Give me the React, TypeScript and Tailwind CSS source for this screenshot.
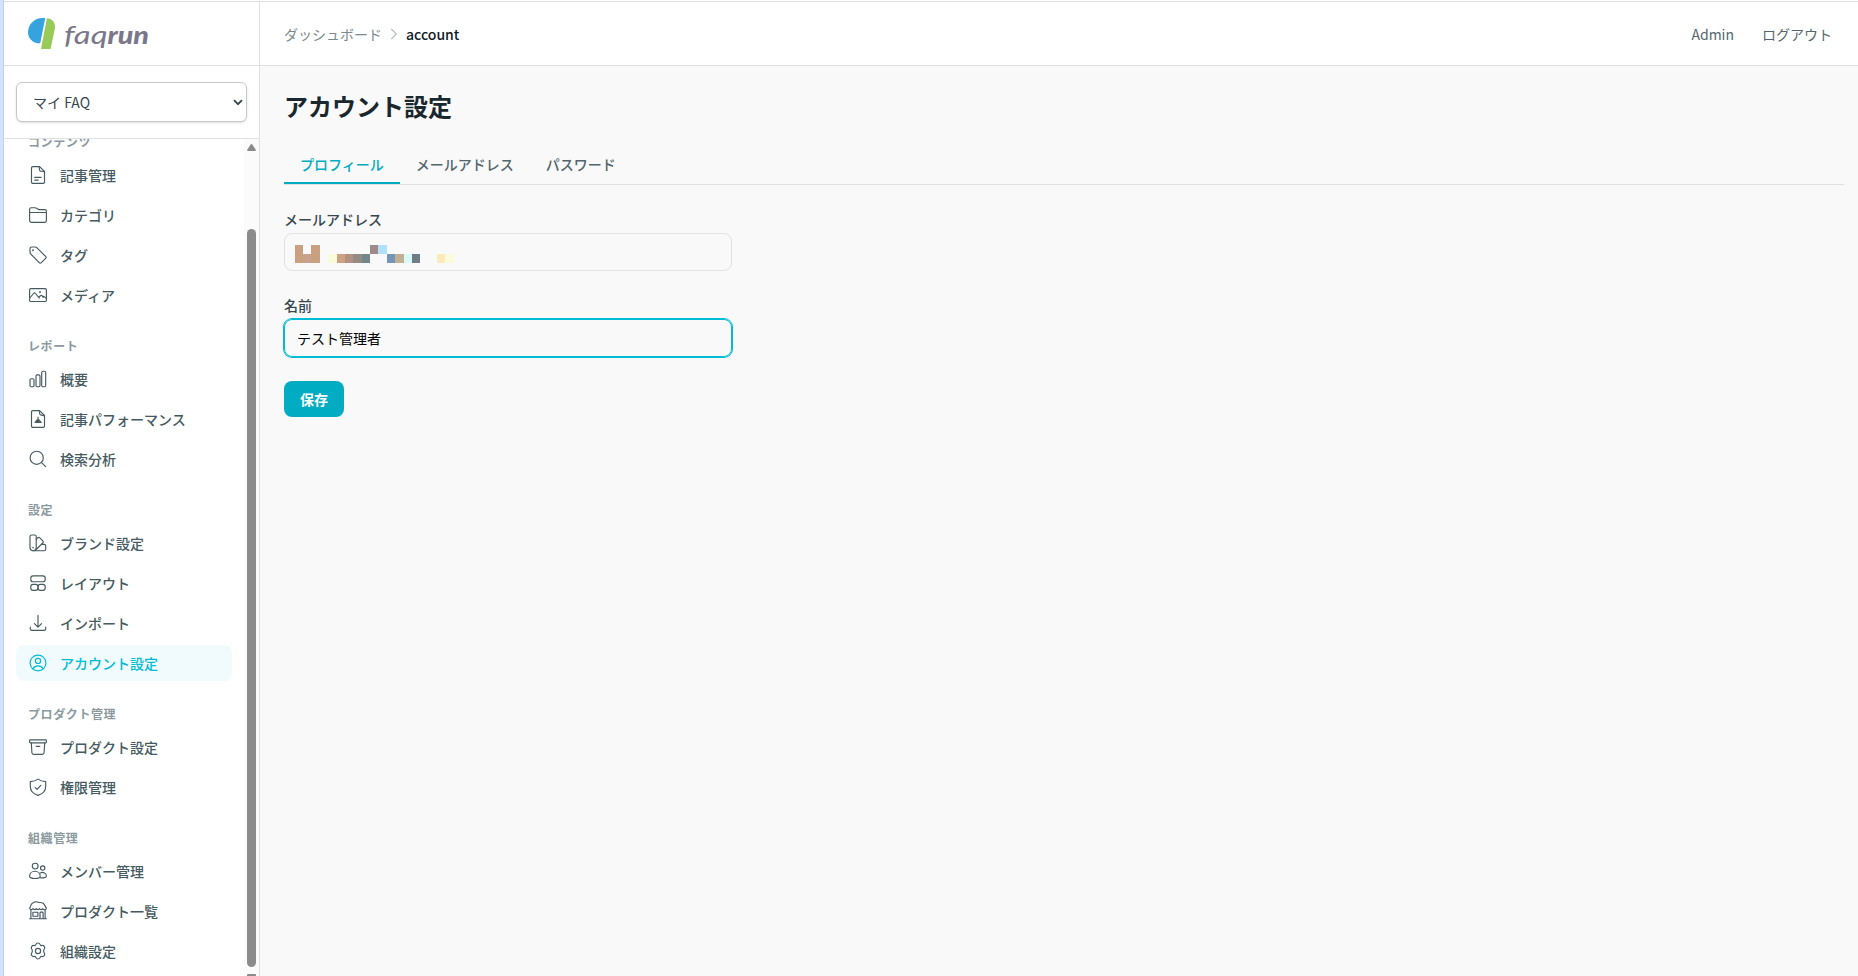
import React, { useState } from 'react';

type IconName =
  | 'article' | 'folder' | 'tag' | 'media' | 'bars' | 'performance' | 'search' | 'brand'
  | 'layout' | 'import' | 'account' | 'product' | 'shield' | 'members' | 'store' | 'gear';

const ICONS: Record<IconName, React.ReactNode> = {
  article: (
    <>
      <path d="M11.6 1.6H4.9a1.4 1.4 0 0 0-1.4 1.4v14a1.4 1.4 0 0 0 1.4 1.4h10.200a1.400 1.400 0 0 0 1.400-1.400V6.500Z" />
      <path d="M10.600 1.600c1 .8 1 1.700.9 3.200 0 1 .4 1.500 1.500 1.500 1.700-.1 2.800 0 3.500.7M6.700 12.400h6.400M6.700 15.100h3.500" />
    </>
  ),
  folder: (
    <path d="M1.600 7.500h16.800M1.600 15.600V4.300c0-1 .6-1.600 1.600-1.600h3.900c.6 0 1 .2 1.500.5l1.500 1c.4.300.8.4 1.300.4h5.400c1 0 1.600.6 1.600 1.600v9.400c0 1-.6 1.700-1.600 1.700H3.200c-1 0-1.600-.7-1.600-1.700Z" />
  ),
  tag: (
    <>
      <path d="M2 7V3.500C2 2.500 2.600 2 3.600 2h3.500c.7 0 1.200.2 1.700.7l8.800 8.700c.7.700.7 1.300 0 2l-4.300 4.300c-.7.7-1.400.7-2.100 0L2.600 8.800C2.200 8.300 2 7.700 2 7Z" />
      <circle cx="5" cy="5.200" r=".4" />
    </>
  ),
  media: (
    <>
      <rect x="1.600" y="3.600" width="16.800" height="12.900" rx="1.300" />
      <path d="m1.800 13 3.700-4.500c.6-.8 1.400-.8 2 0l3.800 4.600M10.700 12.200l1.700-1.500c.6-.5 1.200-.5 1.700.1l1.200 1.600M14.600 11.400c1-.8 1.600-.3 3.700 2" />
      <circle cx="12" cy="7" r=".4" />
    </>
  ),
  bars: (
    <>
      <rect x="2" y="9.700" width="4" height="8" rx="1.200" />
      <rect x="8" y="5.900" width="4" height="11.800" rx="1.200" />
      <rect x="13.700" y="2.200" width="4" height="15.500" rx="1.200" />
    </>
  ),
  performance: (
    <>
      <path d="M11.600 1.600H4.900a1.400 1.400 0 0 0-1.400 1.400v14a1.400 1.400 0 0 0 1.400 1.400h10.200a1.400 1.400 0 0 0 1.400-1.400V6.500Z" />
      <path d="M10.800 1.600c1 .8 1 1.700.9 3 0 1 .4 1.500 1.500 1.500 1.500 0 2.600.1 3.300.9M7 13.300h6.200M10 8v5M7.800 12.300l1.300-1.400v2.200M12.400 12.300l-1.500-1.400v2.200" />
    </>
  ),
  search: (
    <>
      <circle cx="8.700" cy="8.800" r="6.600" />
      <path d="m13.500 13.600 4.200 4.100" />
    </>
  ),
  brand: (
    <>
      <path d="M3.500 2h3.200c.9 0 1.500.6 1.500 1.500v11.300c0 1.800-1.200 2.900-3 2.900h-.1c-1.900 0-3.100-1.100-3.100-2.900V3.500C2 2.600 2.600 2 3.500 2Z" />
      <path d="m8.300 6.300 1.400-1.400c.7-.7 1.400-.7 2.100 0l3 3c.7.7.7 1.400 0 2.100l-7.200 7" />
      <path d="M13.500 11.400h2.700c.9 0 1.500.6 1.500 1.500v3.300c0 .9-.6 1.500-1.500 1.500H5.200" />
      <circle cx="5.100" cy="14.600" r=".3" />
    </>
  ),
  layout: (
    <>
      <rect x="2.800" y="2.800" width="14.400" height="5.900" rx="2.300" />
      <rect x="2.800" y="11.400" width="7.200" height="5.900" rx="2.300" />
      <rect x="10" y="11.400" width="7.200" height="5.900" rx="2.300" />
    </>
  ),
  import: <path d="M10 2.400v11.700M6.400 10.600l3.600 3.600 3.600-3.600M2.300 14v1.700c0 1 .7 1.700 1.700 1.700h12c1 0 1.700-.7 1.700-1.700V14" />,
  account: (
    <>
      <circle cx="10" cy="10" r="7.900" />
      <circle cx="10" cy="7.900" r="2.600" />
      <path d="M4.900 15.900c1-2 2.800-3 5.100-3s4.100 1 5.100 3" />
    </>
  ),
  product: (
    <>
      <rect x="1.600" y="2.800" width="16.800" height="3" rx=".8" />
      <path d="m3.300 5.800.6 9.900c.1 1.100.6 1.600 1.700 1.600h8.800c1.100 0 1.600-.5 1.700-1.600l.6-9.900M8.200 9.400h3.600" />
    </>
  ),
  shield: (
    <path d="M10 2.100c2.400 1.700 4.800 2.300 7.700 2.500v4.900c0 4.500-3.100 7.400-7.700 8.900-4.600-1.500-7.700-4.400-7.700-8.900V4.600c2.900-.2 5.300-.8 7.700-2.500ZM7.200 10.600l1.900 1.800 3.700-4.100" />
  ),
  members: (
    <>
      <circle cx="7.200" cy="5.100" r="2.900" />
      <circle cx="14.700" cy="7" r="2.200" />
      <path d="M1.600 15.200c0-2.900 2.300-5 5.300-5s5.300 2.100 5.300 5c0 3-10.600 3-10.600 0ZM12.400 11.900c2.800-1.300 6 .3 6 3 0 1.700-3 2.300-6.300 1.700" />
    </>
  ),
  store: (
    <>
      <path d="M3.200 3.600C4 2 5.500 1.500 7 .9c1.200-.3 2.600-.1 3.600.6 1.800-.2 5 .4 5.700 2.100l1.900 3.300c.4 1-.5 1.900-1.600 1.900s-1.600-.7-1.800-1.200c-.8 1.300-2.700 1.300-3.200 0-.6 1.300-2.600 1.300-3.200 0-.8 1.300-2.700 1.300-3.300 0-.6 1.300-3.200 1.500-3.400-.3Z" />
      <path d="M1.600 17.700h16.800M2.900 9v8.700M17.100 9v8.700M4.900 11.200h5v4h-5ZM12 17.500v-5.600c0-.5.300-.8.800-.8h1.500c.5 0 .8.300.8.800v5.600" />
    </>
  ),
  gear: (
    <>
      <path d="M8 3.400c.6-1.900 3.400-1.900 4 0 .3.900 1 1.300 1.900 1.100 2-.4 3.800 2 2.300 3.700-.7.700-.7 2.900 0 3.600 1.500 1.700-.3 4.100-2.300 3.700-.9-.2-1.600.2-1.900 1.100-.6 1.900-3.400 1.900-4 0-.3-.9-1-1.300-1.900-1.100-2 .4-3.800-2-2.300-3.700.7-.7.700-2.900 0-3.600-1.500-1.700.3-4.100 2.300-3.700.9.200 1.600-.2 1.900-1.100Z" />
      <circle cx="10" cy="10" r="2.600" />
    </>
  ),
};

const Icon: React.FC<{ name: IconName }> = ({ name }) => (
  <svg
    className="w-5 h-5 shrink-0"
    viewBox="0 0 20 20"
    fill="none"
    stroke="currentColor"
    strokeWidth="1.15"
    strokeLinecap="round"
    strokeLinejoin="round"
  >
    {ICONS[name]}
  </svg>
);

interface NavSection {
  title: string;
  items: { label: string; icon: IconName }[];
}

const SECTIONS: NavSection[] = [
  {
    title: 'コンテンツ',
    items: [
      { label: '記事管理', icon: 'article' },
      { label: 'カテゴリ', icon: 'folder' },
      { label: 'タグ', icon: 'tag' },
      { label: 'メディア', icon: 'media' },
    ],
  },
  {
    title: 'レポート',
    items: [
      { label: '概要', icon: 'bars' },
      { label: '記事パフォーマンス', icon: 'performance' },
      { label: '検索分析', icon: 'search' },
    ],
  },
  {
    title: '設定',
    items: [
      { label: 'ブランド設定', icon: 'brand' },
      { label: 'レイアウト', icon: 'layout' },
      { label: 'インポート', icon: 'import' },
      { label: 'アカウント設定', icon: 'account' },
    ],
  },
  {
    title: 'プロダクト管理',
    items: [
      { label: 'プロダクト設定', icon: 'product' },
      { label: '権限管理', icon: 'shield' },
    ],
  },
  {
    title: '組織管理',
    items: [
      { label: 'メンバー管理', icon: 'members' },
      { label: 'プロダクト一覧', icon: 'store' },
      { label: '組織設定', icon: 'gear' },
    ],
  },
];

const TABS = ['プロフィール', 'メールアドレス', 'パスワード'];

// x, y, width, height, fill
const MOSAIC: [number, number, number, number, string][] = [
  [0, 0, 8, 18, '#c9a080'],
  [8, 9, 8, 9, '#c9a28b'],
  [16, 0, 9, 18, '#c9a080'],
  [33, 9, 9, 9, '#fafadd'],
  [42, 9, 8, 9, '#cfa382'],
  [50, 9, 8, 9, '#b39282'],
  [58, 9, 9, 9, '#948c82'],
  [67, 9, 8, 9, '#73868c'],
  [75, 0, 8, 9, '#9f8a8a'],
  [83, 0, 9, 9, '#b0e0fa'],
  [92, 9, 8, 9, '#7497b8'],
  [100, 9, 9, 9, '#c2b092'],
  [109, 9, 8, 9, '#dafafa'],
  [117, 9, 8, 9, '#6f7e86'],
  [142, 9, 8, 9, '#fbebbb'],
  [150, 9, 9, 9, '#fafadd'],
];

const Logo = () => (
  <svg className="w-[124px] h-9" viewBox="0 0 124 36">
    <path d="M17.200 2.200 12.200 27.300C5 27.600 0 22.500 0 16.200 0 8.200 6.400 1.900 14.500 1.900c1 0 1.900.1 2.700.3Z" fill="#34a3de" />
    <path d="M18.900 2.200c5 .2 8.900 4.400 8 10.200L22.500 33H13Z" fill="#98ca58" />
    <text x="36" y="27.800" fontFamily="Lato" fontStyle="italic" fontWeight="400" fontSize="26" fill="#7b778a" textLength="43.500" lengthAdjust="spacingAndGlyphs">faq</text>
    <text x="79.500" y="27.800" fontFamily="Lato" fontStyle="italic" fontWeight="900" fontSize="25" fill="#7b778a" textLength="41.500" lengthAdjust="spacingAndGlyphs">run</text>
  </svg>
);

const Sidebar = () => (
  <aside className="w-[256px] shrink-0 bg-white border-r border-[#dfe0e1] flex flex-col">
    <div className="h-16 shrink-0 pl-6 pt-px flex items-start border-b border-[#dfe0e1]">
      <div className="mt-[13px]"><Logo /></div>
    </div>
    <div className="h-[73px] shrink-0 px-3 pt-4 border-b border-[#dfe0e1]">
      <button className="w-[231px] h-10 pl-4 pr-[3px] flex items-center justify-between rounded-md border border-[#c6c9cb] bg-white shadow-sm text-sm text-[#37474f]">
        マイ FAQ
        <svg className="w-[10px] h-[7px]" viewBox="0 0 10 7" fill="none" stroke="#37474f" strokeWidth="1.900">
          <path d="m1 1.200 4 4 4-4" />
        </svg>
      </button>
    </div>
    <div className="flex-1 min-h-0 flex">
      <nav className="flex-1 overflow-hidden pl-3 pr-3">
        <div className="-mt-[6px] flex flex-col gap-6">
          {SECTIONS.map((section) => (
            <div key={section.title}>
              <h3 className="pt-px mb-[7px] px-3 text-xs leading-4 font-bold tracking-wider text-[#8a9a9f]">{section.title}</h3>
              <ul className="flex flex-col gap-1">
                {section.items.map((item) => (
                  <li
                    key={item.label}
                    className={`h-9 px-3 flex items-center gap-3 rounded-lg text-sm font-medium whitespace-nowrap ${
                      item.icon === 'account' ? 'bg-[#f1fbfd] text-[#00bcd4]' : 'text-[#465a61]'
                    }`}
                  >
                    <Icon name={item.icon} />
                    {item.label}
                  </li>
                ))}
              </ul>
            </div>
          ))}
        </div>
      </nav>
      {/* Scrollbar */}
      <div className="w-[15px] shrink-0 bg-[#fbfbfb] flex flex-col items-center overflow-hidden">
        <svg className="mt-[5px] w-[9px] h-[7px] shrink-0" viewBox="0 0 9 7" fill="#8b8b8b">
          <path d="M3.700.5q.8-.9 1.600 0L8.700 5.500q.5 1.500-.8 1.500H1.100Q-.2 7 .3 5.500Z" />
        </svg>
        <div className="mt-[78px] w-[9px] h-[738px] shrink-0 rounded-full bg-[#8b8b8b]" />
        <div className="mt-[7px] w-[9px] h-[7px] shrink-0 rounded-t-[1px] bg-[#8b8b8b]" />
      </div>
    </div>
  </aside>
);

const App: React.FC = () => {
  const [tab, setTab] = useState(TABS[0]);
  const [name, setName] = useState('テスト管理者');

  return (
    <div className="h-screen flex overflow-hidden bg-[#f9f9f9] font-['Noto_Sans_CJK_JP','Noto_Sans_JP',sans-serif]">
      <div className="w-1 shrink-0 bg-[#d3e3fd] border-r border-[#bfd0ee]" />
      <div className="flex-1 min-w-0 flex flex-col">
        <div className="h-[2px] shrink-0 bg-white border-b border-[#dfe0e1]" />
        <div className="flex-1 min-h-0 flex">
          <Sidebar />
          <main className="flex-1 min-w-0">
            <header className="h-16 pl-6 pr-[26px] flex items-center justify-between bg-white border-b border-[#dfe0e1] text-sm">
              <div className="flex items-center gap-2">
                <span className="text-[#7b898d]">ダッシュボード</span>
                <svg className="w-2 h-3" viewBox="0 0 8 12" fill="none" stroke="#b9bfc3" strokeWidth="1.200">
                  <path d="m1.300 1 5 5-5 5" />
                </svg>
                <span className="font-medium text-[#102027]">account</span>
              </div>
              <div className="flex items-center gap-7 text-[#54676e]">
                <span>Admin</span>
                <span>ログアウト</span>
              </div>
            </header>

            <div className="pl-6 pr-[14px] pt-6">
              <h1 className="text-2xl font-bold text-[#1a272c]">アカウント設定</h1>
              <div className="mt-6 flex border-b border-[#dfe0e1]">
                {TABS.map((t) => (
                  <button
                    key={t}
                    onClick={() => setTab(t)}
                    className={`px-4 py-2 text-sm font-medium border-b-2 ${
                      t === tab ? 'border-[#00acc1] text-[#00acc1]' : 'border-transparent text-[#52656c]'
                    }`}
                  >
                    {t}
                  </button>
                ))}
              </div>

              <div className="mt-6 max-w-md flex flex-col items-start gap-6">
                <div className="w-full">
                  <label className="block mb-1 text-sm font-medium text-[#37474f]">メールアドレス</label>
                  <div className="h-[38px] pl-[10px] pt-[11px] rounded-lg border border-[#e0e1e2]">
                    <svg className="w-40 h-[18px]" viewBox="0 0 160 18" shapeRendering="crispEdges">
                      {MOSAIC.map(([x, y, w, h, fill], i) => (
                        <rect key={i} x={x} y={y} width={w} height={h} fill={fill} />
                      ))}
                    </svg>
                  </div>
                </div>
                <div className="w-full">
                  <label className="block mb-1 text-sm font-medium text-[#37474f]">名前</label>
                  <input
                    value={name}
                    onChange={(e) => setName(e.target.value)}
                    className="block w-full h-[38px] px-3 rounded-lg border border-[#00bcd4] ring-1 ring-[#00bcd4] text-sm text-black outline-none"
                  />
                </div>
                <button className="h-9 px-4 rounded-lg bg-[#00acc1] text-sm font-bold text-white">保存</button>
              </div>
            </div>
          </main>
        </div>
      </div>
    </div>
  );
};

export default App;
